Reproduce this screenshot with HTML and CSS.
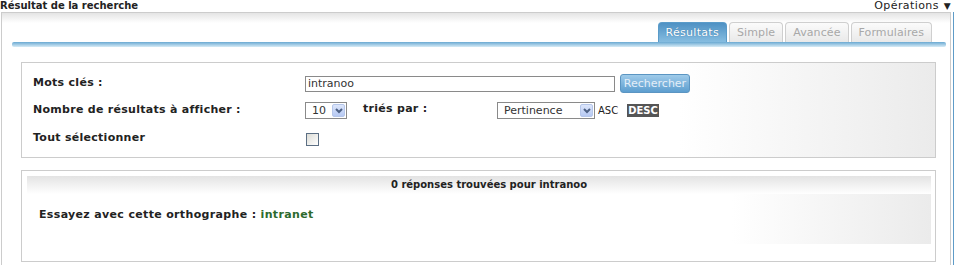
FILE: index.html
```html
<!DOCTYPE html>
<html lang="fr">
  <head>
    <meta charset="UTF-8" />
    <title>Résultat de la recherche</title>
    <link rel="stylesheet" href="styles.css">
  </head>
  <body>
    <!-- Title bar -->
    <div class="topbar">
      <span class="page-title">Résultat de la recherche</span>
      <span class="ops">Opérations <span class="caret">&#9660;</span></span>
    </div>

    <div class="main">
      <div class="panel">
        <!-- Tabs -->
        <ul class="tabs">
          <li class="tab active">Résultats</li>
          <li class="tab">Simple</li>
          <li class="tab">Avancée</li>
          <li class="tab">Formulaires</li>
        </ul>
        <div class="tabline"></div>

        <!-- Search form -->
        <form class="search-box">
          <label class="lbl" for="q">Mots clés :</label>
          <div class="field">
            <input id="q" class="text" type="text" value="intranoo" />
            <button class="btn" type="button">Rechercher</button>
          </div>

          <label class="lbl" for="count">Nombre de résultats à afficher :</label>
          <div class="field">
            <div class="select sel-small">
              <select id="count"><option>10</option></select>
              <span class="arrow">
                <svg width="8" height="6" viewBox="0 0 8 6"><path d="M1 1 L4 4 L7 1" fill="none" stroke="#4d6185" stroke-width="2"/></svg>
              </span>
            </div>
            <span class="sort-lbl">triés par :</span>
            <div class="select sel-sort">
              <select><option>Pertinence</option></select>
              <span class="arrow">
                <svg width="8" height="6" viewBox="0 0 8 6"><path d="M1 1 L4 4 L7 1" fill="none" stroke="#4d6185" stroke-width="2"/></svg>
              </span>
            </div>
            <span class="asc">ASC</span>
            <span class="desc">DESC</span>
          </div>

          <label class="lbl" for="all">Tout sélectionner</label>
          <div class="field">
            <input id="all" class="check" type="checkbox" />
          </div>
        </form>

        <!-- Results -->
        <div class="results">
          <div class="results-inner">
            <div class="results-head">0 réponses trouvées pour intranoo</div>
            <p class="suggest">Essayez avec cette orthographe : <a href="#">intranet</a></p>
            <div class="results-foot"></div>
          </div>
        </div>
      </div>
      <div class="edge"></div>
    </div>
  </body>
</html>
```

FILE: styles.css
```css
body {
  margin: 0;
  font-family: "DejaVu Sans", Verdana, sans-serif;
  font-size: 11px;
  color: #222222;
  background-color: #ffffff;
  height: 265px;
  overflow: hidden;
}
.topbar {
  display: flex;
  justify-content: space-between;
  align-items: center;
  height: 12px;
  line-height: 12px;
}
.page-title {
  font-weight: bold;
  font-size: 10px;
}
.ops {
  font-size: 11px;
  letter-spacing: 0.4px;
  padding-right: 6px;
}
.caret {
  font-size: 9px;
  margin-left: 1px;
}
.main {
  display: flex;
  gap: 2px;
}
.panel {
  margin-left: 1px;
  width: 948px;
  height: 260px;
  border: 1px solid #cccccc;
  border-bottom: none;
  background: linear-gradient(#e4e4e4, #ffffff 10px);
}
.edge {
  width: 1px;
  height: 253px;
  background-color: #5f9cc8;
}

/* Tabs */
.tabs {
  list-style: none;
  margin: 0;
  padding: 9px 18px 0 0;
  display: flex;
  justify-content: flex-end;
  gap: 2px;
}
.tab {
  height: 19px;
  line-height: 19px;
  padding: 0 7px;
  border: 1px solid #cfcfcf;
  border-bottom: none;
  border-radius: 4px 4px 0 0;
  background: linear-gradient(#fbfbfb, #e9e9e9);
  color: #a8a8a8;
  letter-spacing: 0.1px;
}
.tab.active {
  padding: 0 7px;
  border-color: #5a9bc9;
  background: linear-gradient(#4e91c4, #86bde0);
  color: #ffffff;
  text-shadow: 0 0 1px #2f6d9c;
  letter-spacing: 0.3px;
}
.tabline {
  height: 5px;
  margin: 0 4px 0 10px;
  border-radius: 2px;
  background: linear-gradient(#6aa9d2, #d6ebf6);
}

/* Search form */
.search-box {
  margin: 15px 14px 0 19px;
  border: 1px solid #cccccc;
  background: linear-gradient(to right, #ffffff 72%, #ebebeb);
  padding: 8px 0 4px 11px;
  display: grid;
  grid-template-columns: 272px 1fr;
  grid-template-rows: 25px 29px 28px;
  align-items: center;
}
.lbl {
  font-weight: bold;
  color: #222222;
  letter-spacing: 0.28px;
  margin-top: -3px;
}
.field {
  display: flex;
  align-items: center;
}
.text {
  box-sizing: border-box;
  width: 310px;
  height: 16px;
  margin: 0;
  padding: 0 2px;
  border: 1px solid #8a8a8a;
  font-family: inherit;
  font-size: 11px;
  color: #333333;
}
.btn {
  margin-left: 5px;
  width: 70px;
  height: 19px;
  padding: 0;
  border: 1px solid #5b95c2;
  border-radius: 3px;
  background: linear-gradient(#9fcbea, #5d9ecf);
  color: #e4eef8;
  font-family: inherit;
  font-size: 11px;
}
.select {
  position: relative;
  height: 17px;
}
.select select {
  appearance: none;
  box-sizing: border-box;
  height: 17px;
  margin: 0;
  padding: 0 0 0 6px;
  border: 1px solid #8a8a8a;
  background-color: #ffffff;
  font-family: inherit;
  font-size: 11px;
  color: #333333;
}
.sel-small select {
  width: 42px;
}
.sel-sort select {
  width: 98px;
}
.arrow {
  position: absolute;
  top: 2px;
  right: 2px;
  width: 13px;
  height: 13px;
  box-sizing: border-box;
  border: 1px solid #b5c6ea;
  border-radius: 2px;
  background: linear-gradient(#dde6fb, #b6c9f3);
  display: flex;
  align-items: center;
  justify-content: center;
}
.sort-lbl {
  font-weight: bold;
  letter-spacing: 0.28px;
  margin-left: 16px;
  width: 134px;
  margin-top: -4px;
}
.asc {
  margin-left: 3px;
  font-size: 10px;
}
.desc {
  margin-left: 9px;
  padding: 0 1px;
  height: 13px;
  line-height: 13px;
  background-color: #555555;
  color: #ffffff;
  font-weight: bold;
  font-size: 10px;
}
.check {
  appearance: none;
  width: 13px;
  height: 13px;
  margin: 0 0 0 1px;
  border: 1px solid #5c6f84;
  background: linear-gradient(135deg, #dcdcd6, #ffffff);
}

/* Results */
.results {
  margin: 12px 14px 0 19px;
  border: 1px solid #cccccc;
  padding: 5px 4px 5px 5px;
  height: 80px;
}
.results-inner {
  height: 80px;
  display: flex;
  flex-direction: column;
  background: linear-gradient(to right, #ffffff 78%, #ebebeb);
}
.results-head {
  height: 18px;
  line-height: 18px;
  padding-left: 20px;
  text-align: center;
  font-weight: bold;
  font-size: 10px;
  background: linear-gradient(#e3e3e3, #ffffff);
}
.suggest {
  margin: 0;
  flex: 1;
  padding: 14px 0 0 12px;
  font-weight: bold;
  letter-spacing: 0.34px;
  color: #222222;
}
.suggest a {
  color: #2d6a2d;
  text-decoration: none;
}
.results-foot {
  height: 12px;
  background-color: #ffffff;
}
```
